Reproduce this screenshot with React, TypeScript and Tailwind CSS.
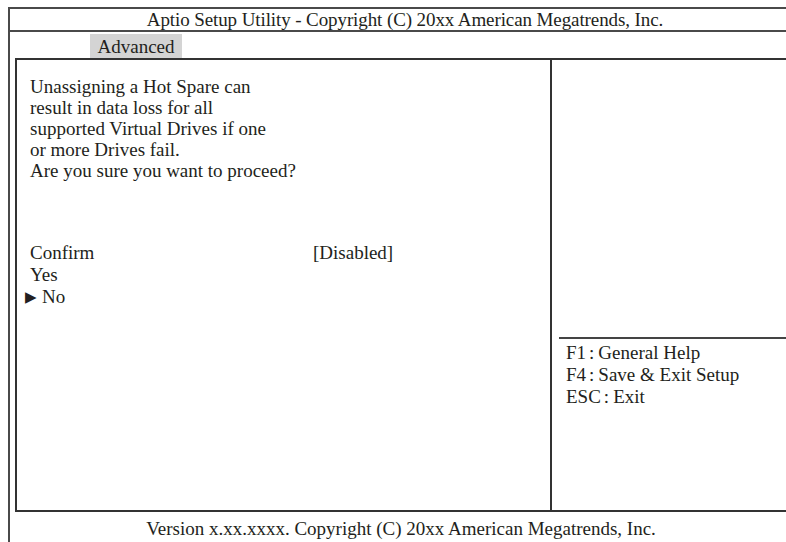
import React from 'react';

const helpKeys = [
  { key: 'F1', label: 'General Help' },
  { key: 'F4', label: 'Save & Exit Setup' },
  { key: 'ESC', label: 'Exit' },
];

const warning = [
  'Unassigning a Hot Spare can',
  'result in data loss for all',
  'supported Virtual Drives if one',
  'or more Drives fail.',
  'Are you sure you want to proceed?',
];

export default function App() {
  return (
    <div className="w-[786px] h-[542px] bg-white overflow-hidden text-[#231f20] text-[19px] font-['Liberation_Serif','Times_New_Roman',serif]">
      <div className="ml-[8px] mt-[7px] h-[535px] flex flex-col border-l-2 border-t-2 border-[#4a4a4a]">
        {/* title bar */}
        <div className="h-[23px] flex items-center justify-center border-b-2 border-[#4a4a4a] leading-none pl-[14px] tracking-[-0.1px]">
          Aptio Setup Utility - Copyright (C) 20xx American Megatrends, Inc.
        </div>

        {/* tab row */}
        <div className="h-[26px] flex items-end pl-[80px]">
          <div className="h-[24px] w-[92px] bg-[#d4d4d4] flex items-center justify-center leading-none">
            Advanced
          </div>
        </div>

        {/* main panel */}
        <div className="ml-[5px] h-[454px] flex border-l-2 border-t-2 border-b-2 border-[#333]">
          <div className="w-[533px] pl-[13px] pt-[16px] leading-[21px]">
            {warning.map((line) => (
              <div key={line}>{line}</div>
            ))}

            <div className="mt-[61px] leading-[22px]">
              <div className="flex">
                <span className="w-[283px]">Confirm</span>
                <span>[Disabled]</span>
              </div>
              <div>Yes</div>
              <div className="flex items-center -ml-[5px]">
                <span className="text-[15px] leading-none mr-[5px]">&#9654;</span>
                <span>No</span>
              </div>
            </div>
          </div>

          <div className="w-[2px] bg-[#333]" />

          <div className="flex-1 flex flex-col pt-[277px]">
            <div className="ml-[7px] h-[2px] bg-[#444]" />
            <div className="pl-[14px] pt-[3px] leading-[22px]">
              {helpKeys.map((h) => (
                <div key={h.key} className="flex">
                  <span>{h.key}</span>
                  <span className="ml-[3px] mr-[4px]">:</span>
                  <span>{h.label}</span>
                </div>
              ))}
            </div>
          </div>
        </div>

        {/* footer */}
        <div className="flex-1 flex items-center justify-center leading-none pl-[6px] pt-[3px]">
          Version x.xx.xxxx. Copyright (C) 20xx American Megatrends, Inc.
        </div>
      </div>
    </div>
  );
}
